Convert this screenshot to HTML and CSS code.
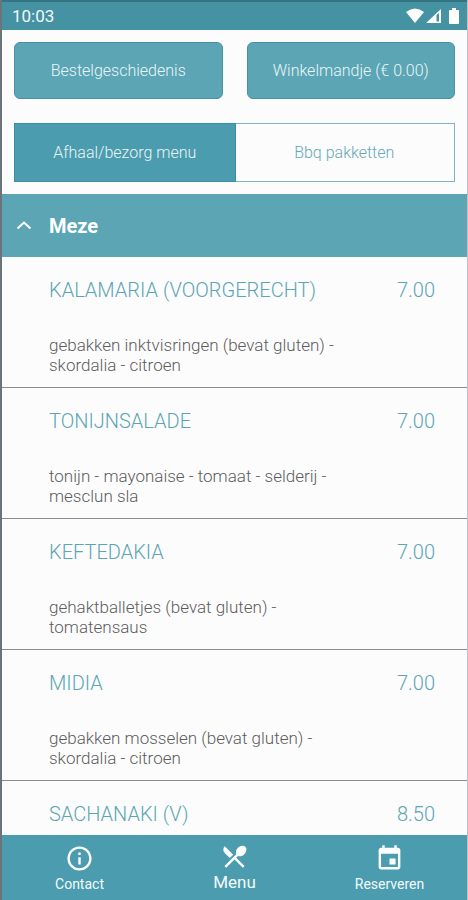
FILE: index.html
```html
<!DOCTYPE html>
<html lang="nl">
<head>
<meta charset="utf-8">
<meta name="viewport" content="width=device-width, initial-scale=1">
<title>Menu</title>
<link rel="stylesheet" href="styles.css">
</head>
<body>
<div class="app">
  <header class="status">
    <span>10:03</span>
    <div class="status-icons">
      <svg width="18" height="16" viewBox="0 0 18 16"><path d="M0 4Q9-3 18 4L9 15Z"/></svg>
      <svg width="15" height="16" viewBox="0 0 15 16"><path fill-rule="evenodd" d="M15 1V15H0ZM10.500 7V13.500H13V5Z"/></svg>
      <svg class="battery" width="10" height="16" viewBox="0 0 10 16"><path d="M3 0H7V2H9Q10 2 10 3V15Q10 16 9 16H1Q0 16 0 15V3Q0 2 1 2H3Z"/></svg>
    </div>
  </header>
  <div class="actions">
    <button class="action" type="button">Bestelgeschiedenis</button>
    <button class="action" type="button">Winkelmandje (€ 0.00)</button>
  </div>
  <div class="tabs">
    <button class="tab tab-active" type="button">Afhaal/bezorg menu</button>
    <button class="tab" type="button">Bbq pakketten</button>
  </div>
  <main class="menu">
    <button class="category" type="button" aria-expanded="true">
      <svg width="16" height="10" viewBox="0 0 16 10"><path d="M1.500 7.500L8 1.500L14.500 7.500"/></svg>
      <span>Meze</span>
    </button>
    <article class="dish">
      <div class="dish-head"><h2>KALAMARIA (VOORGERECHT)</h2><span>7.00</span></div>
      <p>gebakken inktvisringen (bevat gluten) - skordalia - citroen</p>
    </article>
    <article class="dish">
      <div class="dish-head"><h2>TONIJNSALADE</h2><span>7.00</span></div>
      <p>tonijn - mayonaise - tomaat - selderij - mesclun sla</p>
    </article>
    <article class="dish">
      <div class="dish-head"><h2>KEFTEDAKIA</h2><span>7.00</span></div>
      <p>gehaktballetjes (bevat gluten) - tomatensaus</p>
    </article>
    <article class="dish">
      <div class="dish-head"><h2>MIDIA</h2><span>7.00</span></div>
      <p>gebakken mosselen (bevat gluten) - skordalia - citroen</p>
    </article>
    <article class="dish">
      <div class="dish-head"><h2>SACHANAKI (V)</h2><span>8.50</span></div>
    </article>
  </main>
  <nav class="nav">
    <a class="nav-link" href="#contact">
      <svg width="29" height="29" viewBox="0 0 24 24"><path d="M11 7h2v2h-2zm0 4h2v6h-2zm1-9C6.480 2 2 6.480 2 12s4.480 10 10 10 10-4.480 10-10S17.520 2 12 2zm0 18c-4.410 0-8-3.590-8-8s3.590-8 8-8 8 3.590 8 8-3.590 8-8 8z"/></svg>
      <span>Contact</span>
    </a>
    <a class="nav-link nav-current" href="#menu">
      <svg width="29" height="29" viewBox="0 0 24 24"><path d="M8.100 13.340l2.830-2.830L3.910 3.500c-1.560 1.560-1.560 4.090 0 5.660l4.190 4.180zm6.780-1.810c1.530.71 3.680.21 5.270-1.380 1.910-1.910 2.280-4.650.81-6.120-1.460-1.460-4.200-1.100-6.120.81-1.590 1.590-2.090 3.740-1.380 5.270L3.700 19.870l1.410 1.410L12 14.410l6.880 6.880 1.410-1.410L13.410 13l1.470-1.470z"/></svg>
      <span>Menu</span>
    </a>
    <a class="nav-link" href="#reserveren">
      <svg width="29" height="29" viewBox="0 0 24 24"><path d="M17 12h-5v5h5v-5zM16 1v2H8V1H6v2H5c-1.110 0-1.990.9-1.990 2L3 19c0 1.100.89 2 2 2h14c1.100 0 2-.9 2-2V5c0-1.100-.9-2-2-2h-1V1h-2zm3 18H5V8h14v11z"/></svg>
      <span>Reserveren</span>
    </a>
  </nav>
</div>
</body>
</html>
```
FILE: styles.css
```css
* { box-sizing: border-box; }

body {
  margin: 0;
  font-family: Roboto, sans-serif;
  font-weight: 300;
  color: #5c5c5c;
  background: #fcfcfc;
}

button {
  font: inherit;
  color: inherit;
  cursor: pointer;
}

.app {
  display: flex;
  flex-direction: column;
  height: 100vh;
  border-left: 2px solid #6b7478;
  border-right: 1px solid #b9c2c4;
}

.status {
  display: flex;
  flex: none;
  align-items: center;
  justify-content: space-between;
  height: 30px;
  padding: 0 8px 0 10px;
  border-top: 2px solid #347482;
  background: #4592a3;
  color: #f2fafb;
  font-size: 17px;
  font-weight: 400;
}

.status-icons {
  display: flex;
  gap: 2px;
  fill: #fff;
}

.battery { margin-left: 6px; }

.actions {
  display: grid;
  grid-template-columns: 1fr 1fr;
  gap: 24px;
  padding: 12px 12px 0;
}

.action {
  height: 57px;
  border: 1px solid #4593a4;
  border-radius: 6px;
  background: #5ba5b5;
  color: #eaf6f8;
  font-size: 16px;
}

.tabs {
  display: grid;
  grid-template-columns: 1fr 1fr;
  margin: 24px 12px 12px;
  border: 1px solid #7fb4c0;
}

.tab {
  height: 57px;
  border: 0;
  background: none;
  color: #65aab8;
  font-size: 16px;
}

.tab-active {
  outline: 1px solid #3a8fa2;
  background: #4a9cae;
  color: #eaf6f8;
}

.menu {
  flex: 1;
  min-height: 0;
  overflow-y: auto;
  scrollbar-width: none;
}

.category {
  display: flex;
  align-items: center;
  gap: 17px;
  width: 100%;
  height: 63px;
  padding: 0 14px;
  border: 0;
  background: #5ba5b5;
  color: #fff;
  font-size: 20px;
  font-weight: 700;
}

.category svg {
  fill: none;
  stroke: #fff;
  stroke-width: 2;
}

.dish {
  padding: 21px 32px 12px 47px;
  border-bottom: 1px solid #8c8c8c;
}

.dish-head {
  display: flex;
  justify-content: space-between;
  color: #5ba5b5;
  font-size: 20px;
  line-height: 24px;
}

.dish h2 {
  margin: 0;
  font: inherit;
}

.dish p {
  max-width: 300px;
  margin: 33px 0 0;
  font-size: 17px;
  line-height: 20px;
}

.nav {
  display: grid;
  flex: none;
  grid-template-columns: 1fr 1fr 1fr;
  height: 65px;
  background: #4a9cae;
}

.nav-link {
  display: flex;
  flex-direction: column;
  align-items: center;
  padding-top: 9px;
  color: #f4fbfc;
  fill: #fff;
  font-size: 14px;
  font-weight: 400;
  line-height: 22px;
  text-decoration: none;
}

.nav-current {
  padding-top: 7px;
  font-size: 17px;
}
```
